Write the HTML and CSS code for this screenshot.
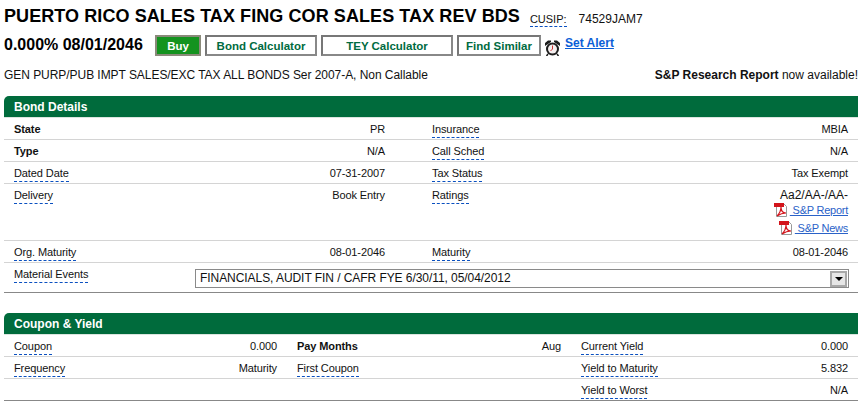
FILE: index.html

```html
<!DOCTYPE html>
<html lang="en">
<head>
<meta charset="UTF-8">
<title>Bond Details</title>
<link rel="stylesheet" href="styles.css">
</head>
<body>
<div class="title-row">
  <h1>PUERTO RICO SALES TAX FING COR SALES TAX REV BDS</h1>
  <span class="cusip"><span class="tip">CUSIP:</span><span class="cusip-val">74529JAM7</span></span>
</div>

<div class="action-row">
  <span class="headline">0.000% 08/01/2046</span>
  <button class="btn btn-buy">Buy</button>
  <button class="btn btn-bond">Bond Calculator</button>
  <button class="btn btn-tey">TEY Calculator</button>
  <button class="btn btn-similar">Find Similar</button>
  <svg class="clock" width="15" height="16" viewBox="0 0 15 16">
    <path d="M0 6 V3 L3 0.500 H6 V2 Z M15 6 V3 L12 0.500 H9 V2 Z" fill="#1c1c1c"/>
    <circle cx="7.500" cy="9" r="6.500" fill="#1c1c1c"/>
    <circle cx="7.500" cy="9" r="4.500" fill="#f4eeee"/>
    <path d="M7.500 9 V5.500 M7.500 9 L5.500 11" stroke="#c33" fill="none"/>
    <path d="M3 14 L1.500 16 M12 14 L13.500 16" stroke="#1c1c1c" stroke-width="1.500"/>
  </svg>
  <a class="alert-link" href="#">Set Alert</a>
</div>

<div class="desc-row">
  <span class="desc">GEN PURP/PUB IMPT SALES/EXC TAX ALL BONDS Ser 2007-A, Non Callable</span>
  <span><b>S&amp;P Research Report</b> now available!</span>
</div>

<div class="panel">
  <div class="panel-head">Bond Details</div>
  <div class="row row-two">
    <b>State</b><span class="val">PR</span>
    <span class="tip">Insurance</span><span class="val">MBIA</span>
  </div>
  <div class="row row-two">
    <b>Type</b><span class="val">N/A</span>
    <span class="tip">Call Sched</span><span class="val">N/A</span>
  </div>
  <div class="row row-two">
    <span class="tip">Dated Date</span><span class="val">07-31-2007</span>
    <span class="tip">Tax Status</span><span class="val">Tax Exempt</span>
  </div>
  <div class="row row-two row-tall">
    <span class="tip">Delivery</span><span class="val">Book Entry</span>
    <span class="tip">Ratings</span>
    <div class="val rating-list">
      <span class="rating">Aa2/AA-/AA-</span>
      <a class="pdf-link" href="#"><svg class="pdf" width="13" height="14" viewBox="0 0 13 14"><path d="M2.500 .5 H9.500 L12.500 3.500 V13.500 H2.500 Z" fill="#fff" stroke="#999"/><rect x="0" y="0" width="10" height="4" fill="#d3141b"/><path d="M3 13 C6 10 7 7 7 4 C7 8 9 10 12 10 C9 10 6 11 3 13 Z" fill="none" stroke="#d3141b" stroke-width="1.200"/></svg><span>&nbsp;S&amp;P Report</span></a>
      <a class="pdf-link" href="#"><svg class="pdf" width="13" height="14" viewBox="0 0 13 14"><path d="M2.500 .5 H9.500 L12.500 3.500 V13.500 H2.500 Z" fill="#fff" stroke="#999"/><rect x="0" y="0" width="10" height="4" fill="#d3141b"/><path d="M3 13 C6 10 7 7 7 4 C7 8 9 10 12 10 C9 10 6 11 3 13 Z" fill="none" stroke="#d3141b" stroke-width="1.200"/></svg><span>&nbsp;S&amp;P News</span></a>
    </div>
  </div>
  <div class="row row-two">
    <span class="tip">Org. Maturity</span><span class="val">08-01-2046</span>
    <span class="tip">Maturity</span><span class="val">08-01-2046</span>
  </div>
  <div class="row row-events row-last">
    <span class="tip">Material Events</span>
    <div class="fake-select">
      <span>FINANCIALS, AUDIT FIN / CAFR FYE 6/30/11, 05/04/2012</span>
      <span class="arrow"></span>
    </div>
  </div>
</div>

<div class="panel">
  <div class="panel-head">Coupon &amp; Yield</div>
  <div class="row row-three">
    <span class="tip">Coupon</span><span class="val">0.000</span>
    <b>Pay Months</b><span class="val">Aug</span>
    <span class="tip">Current Yield</span><span class="val">0.000</span>
  </div>
  <div class="row row-three">
    <span class="tip">Frequency</span><span class="val">Maturity</span>
    <span class="tip">First Coupon</span><span class="val"></span>
    <span class="tip">Yield to Maturity</span><span class="val">5.832</span>
  </div>
  <div class="row row-three row-last">
    <span></span><span></span>
    <span></span><span></span>
    <span class="tip">Yield to Worst</span><span class="val">N/A</span>
  </div>
</div>
</body>
</html>
```

FILE: styles.css

```css
body{font-family:"Liberation Sans",Arial,sans-serif;font-size:11px;color:#111;background:#fff;margin:0;padding:6px 7px 0 4px}

.title-row{display:flex;align-items:baseline;height:25px}
h1{font-size:18px;font-weight:bold;margin:0;color:#000;white-space:nowrap;letter-spacing:.08px}
.cusip{font-size:12px;margin-left:10px;position:relative;top:1px}
.cusip .tip{font-size:11px}
.cusip-val{margin-left:12px}

.action-row{display:flex;align-items:center;height:25px;margin-top:2px}
.headline{font-size:16px;font-weight:bold;color:#000;width:151px;margin-top:-1px}
.btn{font-family:inherit;font-size:11.5px;font-weight:bold;height:21px;padding:0;margin-right:4px;border:2px solid;border-color:#777 #888 #888 #777;background:#fff;color:#006b3f}
.btn-buy{width:46px;background:#14931f;color:#fff;border-color:#8a8a7a}
.btn-bond{width:112px}
.btn-tey{width:132px}
.btn-similar{width:84px}
.clock{margin-top:4px;flex-shrink:0}
.alert-link{font-size:12px;font-weight:bold;color:#0b5ed7;margin:-5px 0 0 5px}

.desc-row{display:flex;justify-content:space-between;font-size:12px;margin-top:10px;height:28px;line-height:14px}
.desc{letter-spacing:-.05px}

.panel{margin-bottom:20px}
.panel-head{height:21px;line-height:23px;background:#006b3c;color:#fff;font-size:12px;font-weight:bold;padding-left:10px;border-radius:5px 0 0 0;border-bottom:1px solid #dbe5df}

.row{display:grid;align-items:start;white-space:nowrap;padding:5px 10px 0;box-sizing:border-box;height:22px;border-bottom:1px solid #d4d4d4;line-height:13px;letter-spacing:-.1px}
.row-two{grid-template-columns:100px 271px 47px 100px 316px}
.row-two > :nth-child(3){grid-column:4}
.row-three{grid-template-columns:100px 163px 20px 100px 164px 20px 100px 167px}
.row-three > :nth-child(3){grid-column:4}
.row-three > :nth-child(5){grid-column:7}
.row-tall{height:57px}
.row-last{border-bottom-color:#888}
.val{text-align:right}
.tip{border-bottom:1px dashed #0a50c0;justify-self:start;line-height:13px;padding-bottom:1px}

.row-events{grid-template-columns:181px 1fr;height:30px;padding-right:9px}
.fake-select{display:flex;align-items:center;justify-content:space-between;height:19px;margin-top:1px;box-sizing:border-box;border:1px solid #8a8a8a;font-size:12px;letter-spacing:-.06px;padding:0 1px 0 4px}
.arrow{width:17px;height:16px;box-sizing:border-box;border:2px solid #a8a8a8;background:#e6e6e6;position:relative}
.arrow::after{content:"";position:absolute;left:3px;top:4px;border:4px solid transparent;border-top-color:#000;border-bottom:0}

.rating-list{display:flex;flex-direction:column;align-items:flex-end}
.rating{height:12px;font-size:12px;letter-spacing:0}
.pdf-link{display:flex;align-items:center;color:#2a62c8;margin-top:1px;height:16px;text-decoration:none;letter-spacing:-.25px}
.pdf-link + .pdf-link{margin-top:2px}
.pdf-link span{text-decoration:underline;margin-left:3px}
```
